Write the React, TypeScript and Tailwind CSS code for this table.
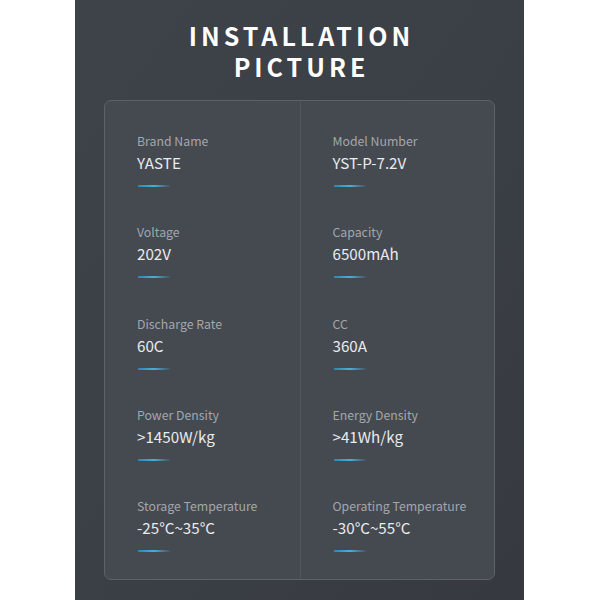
const specs = [
  { label: "Brand Name", value: "YASTE" },
  { label: "Model Number", value: "YST-P-7.2V" },
  { label: "Voltage", value: "202V" },
  { label: "Capacity", value: "6500mAh" },
  { label: "Discharge Rate", value: "60C" },
  { label: "CC", value: "360A" },
  { label: "Power Density", value: ">1450W/kg" },
  { label: "Energy Density", value: ">41Wh/kg" },
  { label: "Storage Temperature", value: "-25°C~35°C" },
  { label: "Operating Temperature", value: "-30°C~55°C" },
];

const Spec = ({ label, value }: { label: string; value: string }) => (
  <div className="flex flex-col">
    <div className="text-[12.3px] leading-[18px] text-[#a3a7ad]">{label}</div>
    <div className="mt-[2px] text-[15.2px] leading-[20px] text-[#e9ebee]">{value}</div>
    <div className="mt-[13px] ml-[1px] h-[2px] w-[32px] bg-gradient-to-r from-[#2a86b8] via-[#4aaed8] to-[#4aaed8]/10" />
  </div>
);

export default function App() {
  const left = specs.filter((_, i) => i % 2 === 0);
  const right = specs.filter((_, i) => i % 2 === 1);

  return (
    <div
      className="w-full h-[600px] bg-white flex justify-center"
      style={{ fontFamily: '"Noto Sans CJK SC", "Noto Sans", sans-serif' }}
    >
      <div className="w-[449px] h-full ml-[-1px] bg-gradient-to-br from-[#3e4249] via-[#3b3f46] to-[#363a40] flex flex-col items-center">
        {/* Title */}
        <h1 className="pt-[20px] pl-[4px] text-center text-[25px] leading-[30.5px] font-bold tracking-[4px] text-white">
          INSTALLATION
          <br />
          PICTURE
        </h1>

        {/* Spec card */}
        <div className="mt-[19px] w-[391px] h-[480px] rounded-[7px] border border-[#5d6168] bg-[#454950] grid grid-cols-2">
          <div className="pl-[32px] pt-[31px] flex flex-col gap-y-[36.3px]">
            {left.map((s) => (
              <Spec key={s.label} {...s} />
            ))}
          </div>
          <div className="pl-[32px] pt-[31px] flex flex-col gap-y-[36.3px] border-l border-[#51555c]">
            {right.map((s) => (
              <Spec key={s.label} {...s} />
            ))}
          </div>
        </div>
      </div>
    </div>
  );
}
